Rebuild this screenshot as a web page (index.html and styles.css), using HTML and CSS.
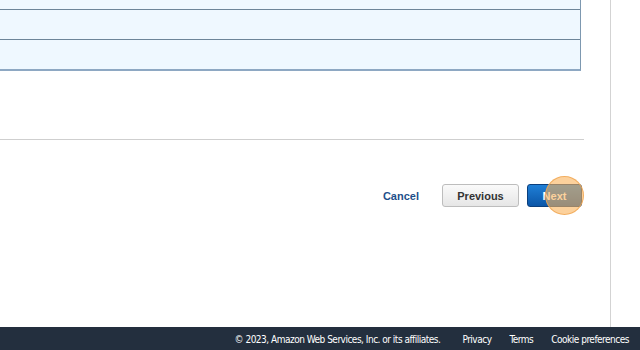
FILE: index.html
```html
<!DOCTYPE html>
<html>
<head>
<meta charset="utf-8">
<link rel="stylesheet" href="styles.css">
</head>
<body>
<div class="page">
  <div class="main">
    <div class="content">
      <div class="table">
        <div class="row row-first"></div>
        <div class="row"></div>
        <div class="row row-last"></div>
      </div>
      <div class="divider"></div>
      <div class="actions">
        <a class="cancel">Cancel</a>
        <button class="btn btn-prev">Previous</button>
        <button class="btn btn-next">Next<span class="highlight"></span></button>
      </div>
    </div>
  </div>
  <footer class="footer">
    <span class="copy">© 2023, Amazon Web Services, Inc. or its affiliates.</span>
    <a class="flink">Privacy</a>
    <a class="flink">Terms</a>
    <a class="flink">Cookie preferences</a>
  </footer>
</div>
</body>
</html>
```
FILE: styles.css
```css
html, body {
  margin: 0;
  padding: 0;
  background: #ffffff;
  font-family: "Liberation Sans", Arial, sans-serif;
}
.page {
  width: 640px;
  height: 350px;
  display: flex;
  flex-direction: column;
  overflow: hidden;
}
.main {
  flex: 1;
  width: 610px;
  border-right: 1px solid #d3d3d3;
  box-sizing: content-box;
}
.content {
  width: 582px;
}
.table {
  display: flex;
  flex-direction: column;
  border-right: 1px solid #7d98b0;
  border-bottom: 2px solid #8ea8c3;
  width: 580px;
}
.row {
  background: #eff8ff;
  height: 29px;
  border-bottom: 1px solid #6d8599;
}
.row-first {
  height: 9px;
}
.row-last {
  border-bottom: none;
}
.divider {
  margin-top: 68px;
  height: 1px;
  background: #cfcfcf;
  width: 584px;
}
.actions {
  margin-top: 44px;
  display: flex;
  justify-content: flex-end;
  align-items: center;
}
.cancel {
  font-size: 11px;
  font-weight: bold;
  color: #1e4f8a;
  margin-right: 23px;
}
.btn {
  position: relative;
  height: 23px;
  border-radius: 3px;
  font-family: "Liberation Sans", Arial, sans-serif;
  font-size: 11px;
  font-weight: bold;
  padding: 0;
  box-sizing: border-box;
}
.btn-prev {
  width: 77px;
  background: linear-gradient(#fafafa, #e6e6e6);
  border: 1px solid #bdbdbd;
  color: #333333;
  margin-right: 8px;
}
.btn-next {
  width: 55px;
  background: linear-gradient(#1f7fd6, #0b56a8);
  border: 1px solid #0b3f7d;
  color: #ffffff;
}
.highlight {
  position: absolute;
  left: 17px;
  top: -9px;
  width: 39px;
  height: 39px;
  border-radius: 50%;
  background: rgba(250, 178, 90, 0.6);
  border: 1px solid rgba(240, 165, 80, 0.8);
  box-sizing: border-box;
}
.footer {
  height: 23px;
  background: #232f3e;
  display: flex;
  justify-content: flex-end;
  align-items: center;
  padding-right: 11px;
  padding-top: 1px;
  box-sizing: border-box;
  color: #ffffff;
  font-family: "DejaVu Sans Condensed", "DejaVu Sans", sans-serif;
  font-stretch: condensed;
  font-size: 10px;
  letter-spacing: -0.5px;
}
.copy {
  margin-right: 22px;
}
.flink {
  margin-right: 18px;
}
.flink:last-child {
  margin-right: 0;
}
```
